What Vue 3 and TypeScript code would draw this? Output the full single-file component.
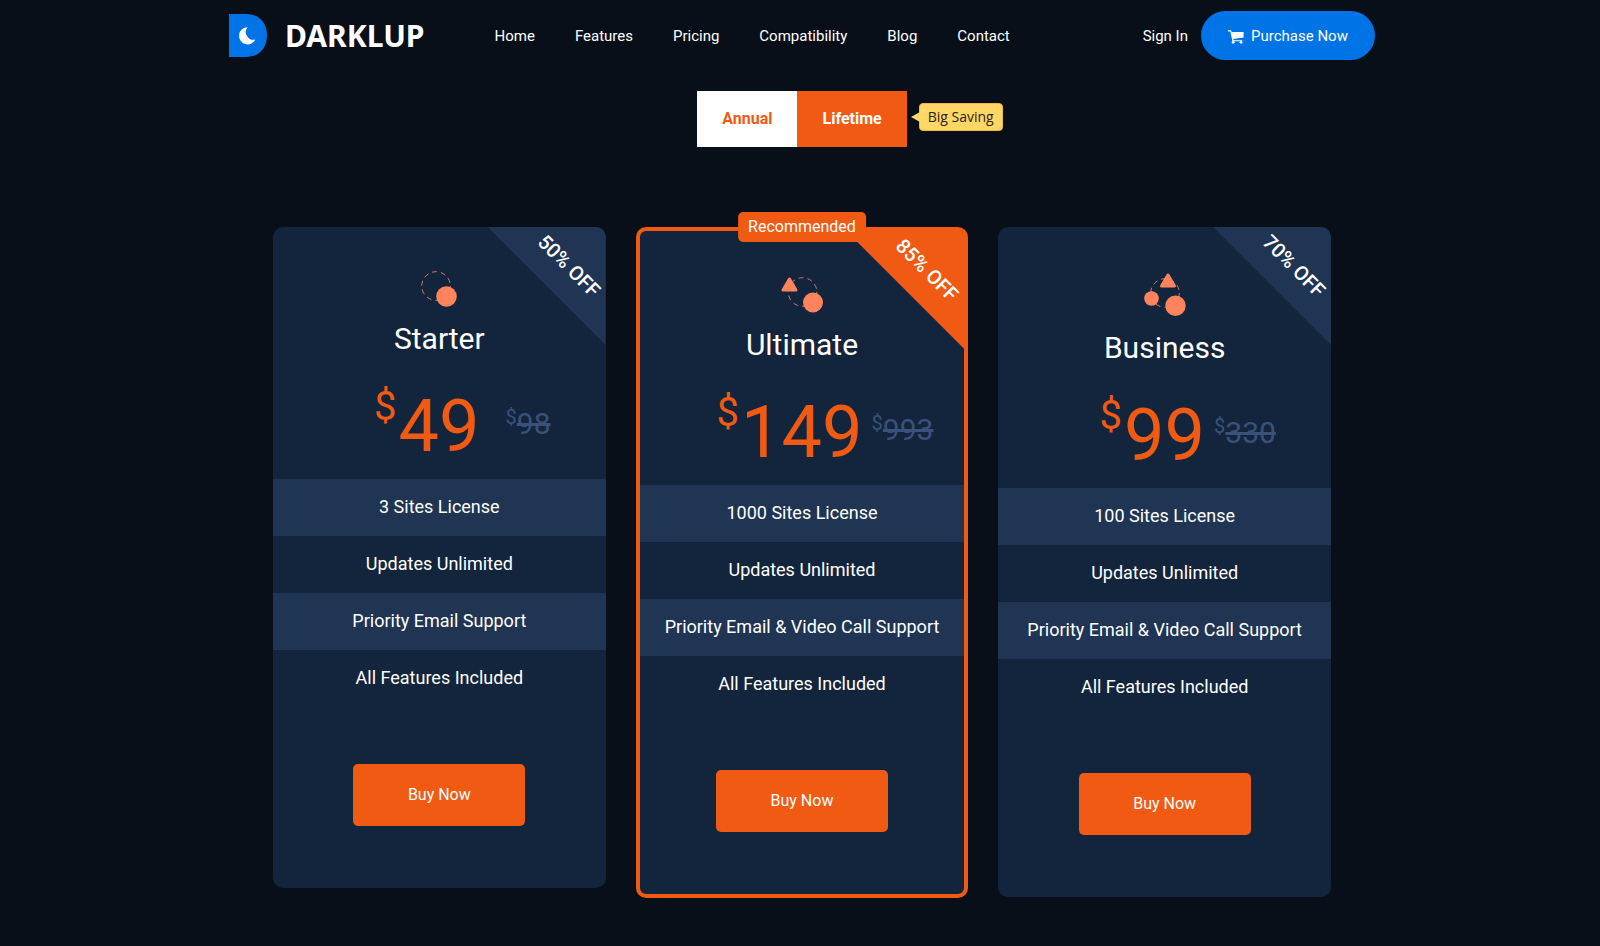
<script setup lang="ts">
import { ref } from 'vue'

interface Plan {
  id: string
  name: string
  price: number
  oldPrice: number
  discount: string
  features: string[]
  recommended?: boolean
}

const links: string[] = ['Home', 'Features', 'Pricing', 'Compatibility', 'Blog', 'Contact']
const billing = ref<'annual' | 'lifetime'>('lifetime')

const plans: Plan[] = [
  {
    id: 'starter',
    name: 'Starter',
    price: 49,
    oldPrice: 98,
    discount: '50% OFF',
    features: ['3 Sites License', 'Updates Unlimited', 'Priority Email Support', 'All Features Included'],
  },
  {
    id: 'ultimate',
    name: 'Ultimate',
    price: 149,
    oldPrice: 993,
    discount: '85% OFF',
    features: ['1000 Sites License', 'Updates Unlimited', 'Priority Email & Video Call Support', 'All Features Included'],
    recommended: true,
  },
  {
    id: 'business',
    name: 'Business',
    price: 99,
    oldPrice: 330,
    discount: '70% OFF',
    features: ['100 Sites License', 'Updates Unlimited', 'Priority Email & Video Call Support', 'All Features Included'],
  },
]
</script>

<template>
  <div class="page">
    <header class="header">
      <a class="brand" href="#">
        <svg class="brand-mark" width="38" height="43" viewBox="0 0 38 43" aria-hidden="true">
          <path d="M0 0H17C30 0 38 9 38 21.500S30 43 17 43H0Z" fill="#0073e6" />
          <path d="M18.500 13.200A8.600 8.600 0 1 0 26.400 25.600A7.800 7.800 0 0 1 18.500 13.200Z" fill="#fff" />
        </svg>
        <span class="brand-name">DARKLUP</span>
      </a>
      <nav class="nav">
        <a v-for="link in links" :key="link" href="#">{{ link }}</a>
      </nav>
      <a class="sign-in" href="#">Sign In</a>
      <button class="purchase" type="button">
        <svg class="cart" width="16" height="14" viewBox="0 0 16 14" aria-hidden="true">
          <path d="M0 .3H3.100L3.600 2H15.600V7.600L5.300 9.100L5.500 10.200H14.200V11.200H4.400L2.400 1.500H0Z" fill="#fff" />
          <circle cx="5.200" cy="12.300" r="1.400" fill="#fff" />
          <circle cx="13" cy="12.300" r="1.400" fill="#fff" />
        </svg>
        <span>Purchase Now</span>
      </button>
    </header>

    <main>
      <div class="billing">
        <div class="toggle" role="group" aria-label="Billing period">
          <button
            type="button"
            class="annual"
            :aria-pressed="billing === 'annual'"
            @click="billing = 'annual'"
          >Annual</button>
          <button
            type="button"
            class="lifetime"
            :aria-pressed="billing === 'lifetime'"
            @click="billing = 'lifetime'"
          >Lifetime</button>
          <span class="saving">Big Saving</span>
        </div>
      </div>

      <section class="plans">
        <article v-for="plan in plans" :key="plan.id" class="card" :class="{ featured: plan.recommended }">
          <span class="corner"><span class="corner-text">{{ plan.discount }}</span></span>
          <span v-if="plan.recommended" class="badge">Recommended</span>

          <svg v-if="plan.id === 'starter'" class="plan-icon" width="36" height="36" viewBox="0 0 36 36" aria-hidden="true">
            <circle class="orbit" cx="15" cy="15" r="14.300" />
            <circle class="solid" cx="25.500" cy="25.500" r="10.300" />
          </svg>
          <svg v-else-if="plan.id === 'ultimate'" class="plan-icon" width="42" height="38" viewBox="0 0 42 38" aria-hidden="true">
            <circle class="orbit" cx="21.500" cy="17" r="14.300" />
            <path class="solid join" d="M8.500 4L15 15H2Z" />
            <circle class="solid" cx="32" cy="27.500" r="10" />
          </svg>
          <svg v-else class="plan-icon" width="42" height="45" viewBox="0 0 42 45" aria-hidden="true">
            <circle class="orbit" cx="21" cy="22" r="14.300" />
            <path class="solid join" d="M24 4L30.500 15H17.500Z" />
            <circle class="solid" cx="7.500" cy="27.500" r="7.300" />
            <circle class="solid" cx="31.500" cy="34.700" r="10.200" />
          </svg>

          <h2>{{ plan.name }}</h2>

          <div class="pricing">
            <span class="currency">$</span>
            <span class="amount">{{ plan.price }}</span>
            <span class="old">
              <span class="old-currency">$</span>
              <s class="old-amount">{{ plan.oldPrice }}</s>
            </span>
          </div>

          <ul class="features">
            <li v-for="feature in plan.features" :key="feature">{{ feature }}</li>
          </ul>

          <button class="buy" type="button">Buy Now</button>
        </article>
      </section>
    </main>
  </div>
</template>

<style>
body {
  margin: 0;
  background: #080f19;
}
</style>

<style scoped>
.page {
  box-sizing: border-box;
  min-height: 100vh;
  padding: 11px 16px 48px 20px;
  background: #080f19;
  color: #fff;
  font-family: Roboto, "Liberation Sans", sans-serif;
}

button {
  border: 0;
  margin: 0;
  font-family: inherit;
  color: #fff;
  cursor: pointer;
}

a {
  color: #fff;
  text-decoration: none;
}

.header {
  display: flex;
  align-items: center;
  max-width: 1146px;
  height: 49px;
  margin: 0 auto;
  font-size: 15px;
  line-height: 24px;
}

.brand {
  display: flex;
  align-items: center;
  gap: 18px;
}

.brand-name {
  font: 700 30px/40px "Noto Sans", "Open Sans", sans-serif;
}

.nav {
  display: flex;
  flex: 1;
  gap: 40px;
  margin-left: 70px;
}

.purchase {
  display: flex;
  align-items: center;
  justify-content: center;
  gap: 7px;
  width: 174px;
  height: 49px;
  margin-left: 13px;
  padding: 0;
  border-radius: 25px;
  background: #0073e6;
  font-size: 15px;
  line-height: 24px;
}

.cart {
  margin-top: 2px;
}

.billing {
  display: flex;
  justify-content: center;
  margin-top: 31px;
}

.toggle {
  position: relative;
  display: flex;
}

.toggle button {
  height: 56px;
  padding: 0 25px 2px;
  font-size: 16px;
  font-weight: 700;
}

.annual {
  background: #fff;
}

.toggle .annual {
  color: #f05a13;
}

.lifetime {
  background: #f05a13;
}

.saving {
  position: absolute;
  top: 12px;
  left: 100%;
  box-sizing: border-box;
  margin-left: 12px;
  padding: 0 8px;
  border: 1px solid #eabb3d;
  border-radius: 4px;
  background: #ffd766;
  color: #2b2410;
  font: 14px/26px "Open Sans", "Noto Sans", sans-serif;
  white-space: nowrap;
}

.saving::before {
  content: "";
  position: absolute;
  top: 8px;
  left: -9px;
  border: 5px solid transparent;
  border-left-width: 0;
  border-right: 9px solid #ffd766;
}

.plans {
  display: grid;
  grid-template-columns: repeat(3, 1fr);
  align-items: start;
  gap: 30px;
  max-width: 1058px;
  margin: 80px auto 0;
}

.card {
  position: relative;
  display: flex;
  flex-direction: column;
  align-items: center;
  padding: 44px 0 62px;
  border-radius: 10px;
  background: #13253c;
}

.featured {
  border: 4px solid #f05a13;
}

.corner {
  position: absolute;
  top: 0;
  right: 0;
  width: 118px;
  height: 118px;
  border-top-right-radius: 10px;
  background: #1f3553;
  clip-path: polygon(0 0, 100% 0, 100% 100%);
}

.featured .corner {
  border-top-right-radius: 0;
  background: #f05a13;
}

.corner-text {
  position: absolute;
  top: 39px;
  left: 81px;
  font-size: 20px;
  font-weight: 500;
  line-height: 24px;
  white-space: nowrap;
  transform: translate(-50%, -50%) rotate(45deg);
}

.badge {
  position: absolute;
  top: -19px;
  left: 50%;
  padding: 0 10px;
  border-radius: 5px;
  background: #f05a13;
  font-size: 16px;
  line-height: 30px;
  transform: translateX(-50%);
}

.plan-icon {
  display: block;
}

.orbit {
  fill: none;
  stroke: #d97a62;
  stroke-width: 1;
  stroke-dasharray: 5 4;
}

.solid {
  fill: #ff845d;
}

.join {
  stroke: #ff845d;
  stroke-width: 3;
  stroke-linejoin: round;
}

h2 {
  margin: 14px 0 30px;
  font-size: 30px;
  font-weight: 400;
  line-height: 36px;
}

.pricing {
  display: flex;
  align-items: flex-start;
  padding: 0 0 16px 46px;
}

.currency {
  color: #f05a13;
  font-size: 40px;
  line-height: 40px;
}

.amount {
  margin: 4px 0 0 2px;
  color: #f05a13;
  font-size: 72px;
  line-height: 72px;
}

.old {
  display: flex;
  justify-content: flex-end;
  width: 71px;
  margin-top: 20px;
  color: #3a527a;
}

.old-currency {
  font-size: 20px;
  line-height: 20px;
}

.old-amount {
  margin-top: 2px;
  font-size: 30px;
  line-height: 30px;
}

.features {
  align-self: stretch;
  margin: 0 0 57px;
  padding: 0;
  list-style: none;
  text-align: center;
  font-size: 18px;
  line-height: 55px;
}

.features li {
  padding-bottom: 2px;
}

.features li:nth-child(odd) {
  background: #1f3553;
}

.buy {
  width: 172px;
  height: 62px;
  padding: 0 0 2px;
  border-radius: 5px;
  background: #f05a13;
  font-size: 16px;
}
</style>
